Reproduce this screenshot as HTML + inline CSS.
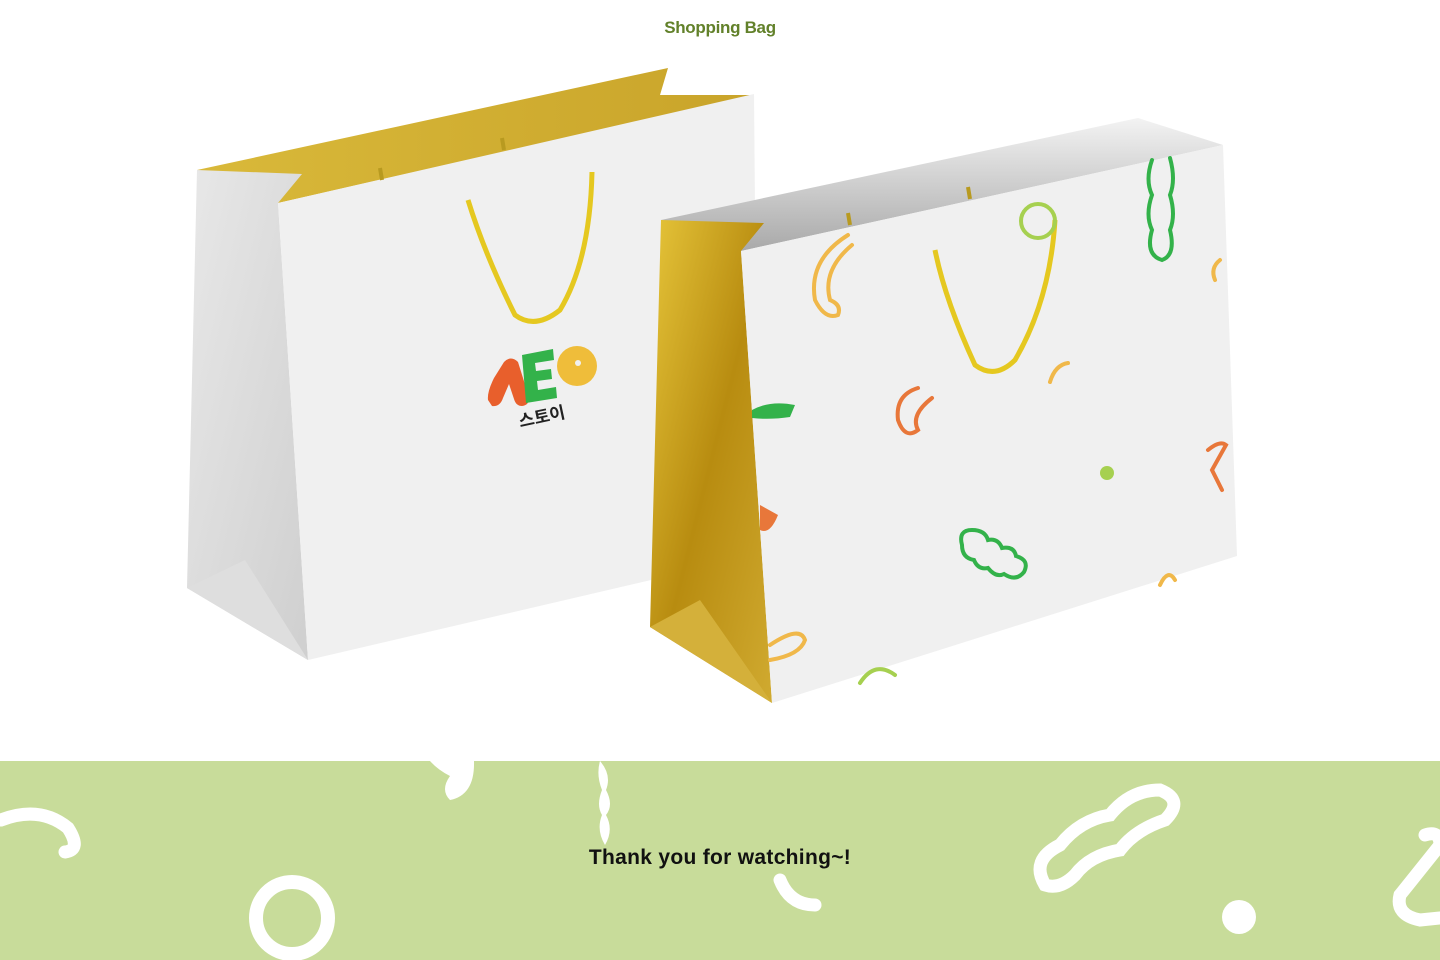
<!DOCTYPE html>
<html><head><meta charset="utf-8"><style>
html,body{margin:0;padding:0;background:#fff;}
body{width:1440px;height:960px;position:relative;overflow:hidden;font-family:"Liberation Sans","Noto Sans CJK KR",sans-serif;}
.title{position:absolute;top:18px;left:0;width:1440px;text-align:center;color:#62812a;font-size:17px;font-weight:bold;letter-spacing:-0.3px;}
.band{position:absolute;left:0;top:761px;width:1440px;height:199px;background:#c8dc9a;overflow:hidden;}
.thanks{position:absolute;top:846px;left:0;width:1440px;text-align:center;font-size:21px;font-weight:bold;color:#111;letter-spacing:0.3px;}
svg{position:absolute;left:0;top:0;}
</style></head><body>
<div class="title">Shopping Bag</div>
<div class="band">
<svg width="1440" height="199" viewBox="0 761 1440 199">
<g fill="none" stroke="#fff" stroke-width="13" stroke-linecap="round">
<path d="M1 820 Q40 805 68 828 Q82 850 65 852"/>
<circle cx="292" cy="918" r="36" stroke-width="14"/>
<path d="M1045 885 Q1030 860 1060 845 Q1080 820 1110 815 Q1130 790 1160 790 Q1185 800 1165 820 Q1135 830 1120 850 Q1090 855 1075 875 Q1060 890 1045 885Z"/>
<path d="M1425 835 Q1440 830 1440 845 L1400 895 Q1395 915 1420 920 L1440 918"/>
<path d="M780 880 Q790 905 815 905"/>
</g>
<g fill="#fff">
<path d="M600 761 Q612 775 606 790 Q614 805 606 815 Q614 830 605 845 Q596 830 602 815 Q596 805 602 790 Q596 775 600 761Z"/>
<path d="M440 761 L474 761 Q475 795 450 800 Q440 790 450 776 Q438 770 430 761Z"/>
<circle cx="1239" cy="917" r="17"/>
</g>
</svg>
</div>
<div class="thanks">Thank you for watching~!</div>

<svg width="1440" height="760" viewBox="0 0 1440 760">
<defs>
<linearGradient id="gy" x1="0" y1="0" x2="1" y2="0"><stop offset="0" stop-color="#d9b93a"/><stop offset="1" stop-color="#c9a42a"/></linearGradient>
<linearGradient id="gus" x1="0" y1="0" x2="1" y2="1"><stop offset="0" stop-color="#e8e8e8"/><stop offset="0.6" stop-color="#d9d9d9"/><stop offset="1" stop-color="#cfcfcf"/></linearGradient>
<linearGradient id="gold" x1="0" y1="0" x2="1" y2="1"><stop offset="0" stop-color="#e6c53a"/><stop offset="0.5" stop-color="#b88c10"/><stop offset="1" stop-color="#d0aa30"/></linearGradient>
<linearGradient id="gray" x1="0" y1="0" x2="0" y2="1"><stop offset="0" stop-color="#f3f3f3"/><stop offset="1" stop-color="#a9a9a9"/></linearGradient>
</defs>
<!-- left bag -->
<polygon points="197,170 668,68 660,95 754,95 278,203" fill="url(#gy)"/>
<polygon points="197,170 302,174 278,203 308,660 187,588" fill="url(#gus)"/>
<polygon points="187,588 245,560 308,660" fill="#dedede"/>
<polygon points="278,203 754,94 758,555 308,660" fill="#f0f0f0"/>
<path d="M380 168 L382 180 M502 138 L504 150" stroke="#b89a20" stroke-width="4"/>
<path d="M468 200 Q485 255 515 315 Q535 330 560 310 Q590 260 592 172" fill="none" stroke="#e5c820" stroke-width="5"/>
<path d="M488 400 Q487 392 494 378 L504 362 Q511 355 518 362 L528 394 Q531 405 522 406 Q516 406 514 399 L509 384 L503 398 Q500 407 492 406Z" fill="#e85f2c"/>
<polygon points="522,355 553,349 554,360 535,363 536,371 551,369 552,379 537,381 538,390 556,387 557,398 526,403" fill="#33b24a"/>
<circle cx="577" cy="366" r="20" fill="#efbd3a"/><circle cx="578" cy="363" r="3" fill="#f0f0f0"/>
<text x="518" y="423" font-size="17" font-weight="bold" fill="#222" transform="rotate(-12 540 415)" font-family="'Noto Sans CJK KR',sans-serif">스토이</text>
<!-- right bag -->
<polygon points="661,220 1138,118 1223,145 741,251" fill="url(#gray)"/>
<polygon points="661,220 764,223 741,251 772,703 650,627" fill="url(#gold)"/>
<polygon points="650,627 700,600 772,703" fill="#d4b03a"/>
<polygon points="741,251 1223,145 1237,556 772,703" fill="#f0f0f0"/>
<path d="M848 213 L850 225 M968 187 L970 199" stroke="#b89a20" stroke-width="4"/>
<path d="M935 250 Q945 300 975 365 Q995 380 1015 360 Q1050 300 1055 220" fill="none" stroke="#e5c820" stroke-width="5"/>
<g fill="none" stroke-width="4" stroke-linecap="round">
<path d="M848 235 Q808 260 815 300 Q825 320 838 315 Q842 305 830 300 Q822 270 852 245" stroke="#f0b84a"/>
<circle cx="1038" cy="221" r="17" stroke="#a6d050"/>
<path d="M1152 160 Q1145 180 1152 195 Q1145 215 1152 230 Q1145 255 1162 260 Q1176 255 1170 230 Q1176 215 1170 195 Q1176 180 1170 158" stroke="#33b24a"/>
<path d="M918 388 Q895 395 898 420 Q905 440 918 430 Q910 415 932 398" stroke="#e8773a"/>
<path d="M962 545 Q958 530 972 530 Q985 530 988 540 Q998 538 1002 548 Q1014 546 1016 556 Q1030 560 1024 572 Q1016 582 1004 574 Q996 578 988 568 Q978 570 974 560 Q962 558 962 545Z" stroke="#33b24a"/>
<path d="M1050 382 Q1055 365 1068 363" stroke="#f0b84a"/>
<path d="M1208 450 Q1220 440 1226 445 L1212 470 L1222 490" stroke="#e8773a"/>
<path d="M1220 260 Q1210 268 1215 280" stroke="#f0b84a"/>
<path d="M770 645 Q800 625 805 640 Q800 655 770 660" stroke="#f0b84a"/>
<path d="M860 683 Q875 660 895 675" stroke="#a6d050"/>
<path d="M1160 585 Q1168 568 1175 580" stroke="#f0b84a"/>
</g>
<path d="M752 410 Q770 400 795 405 L790 417 Q770 420 752 418Z" fill="#33b24a"/>
<circle cx="1107" cy="473" r="7" fill="#a6d050"/>
<path d="M760 505 L778 515 Q770 535 760 530Z" fill="#e8773a"/>
</svg>
</body></html>
